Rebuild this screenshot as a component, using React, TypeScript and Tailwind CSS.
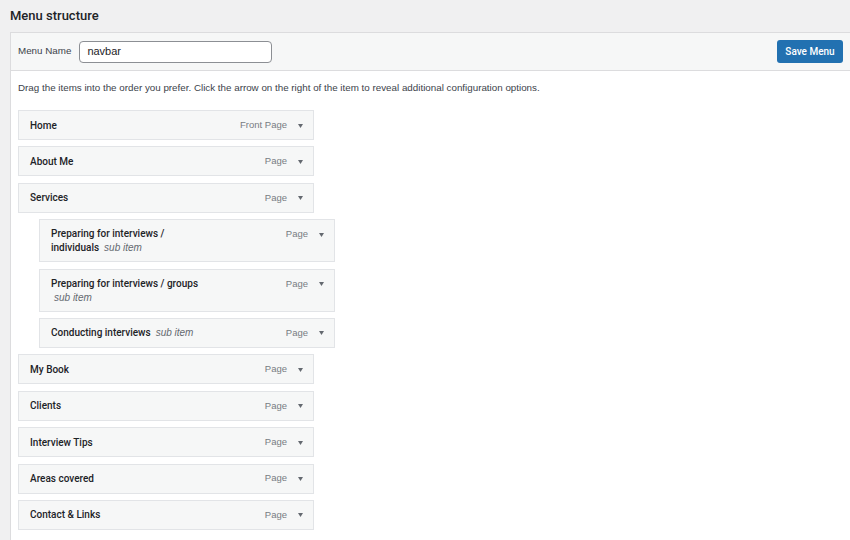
const font = "font-['Liberation_Sans','Helvetica',sans-serif]";
const strong = "font-['Roboto','Liberation_Sans',sans-serif] font-medium";

type Item = { title: string; type: string; sub?: boolean; wrap?: "inline" | "below" | "twoLine" };

const items: Item[] = [
  { title: "Home", type: "Front Page" },
  { title: "About Me", type: "Page" },
  { title: "Services", type: "Page" },
  { title: "Preparing for interviews /", type: "Page", sub: true, wrap: "twoLine" },
  { title: "Preparing for interviews / groups", type: "Page", sub: true, wrap: "below" },
  { title: "Conducting interviews", type: "Page", sub: true, wrap: "inline" },
  { title: "My Book", type: "Page" },
  { title: "Clients", type: "Page" },
  { title: "Interview Tips", type: "Page" },
  { title: "Areas covered", type: "Page" },
  { title: "Contact & Links", type: "Page" },
];

function SubLabel({ gap = "ml-[5px]" }: { gap?: string }) {
  return <span className={`${gap} ${font} font-normal italic text-[#646970]`}>sub item</span>;
}

function Title({ item }: { item: Item }) {
  if (item.wrap === "twoLine") {
    return (
      <div className="leading-[14px]">
        <div>Preparing for interviews /</div>
        <div>
          individuals
          <SubLabel />
        </div>
      </div>
    );
  }
  if (item.wrap === "below") {
    return (
      <div className="leading-[14px]">
        <div>{item.title}</div>
        <div>
          <SubLabel gap="ml-[3px]" />
        </div>
      </div>
    );
  }
  return (
    <div>
      {item.title}
      {item.sub && <SubLabel />}
    </div>
  );
}

function MenuItem({ item }: { item: Item }) {
  const tall = item.wrap === "twoLine" || item.wrap === "below";
  return (
    <div
      className={`w-[296px] border border-[#e2e4e7] bg-[#f6f7f7] flex justify-between pl-[11px] pr-[10px] ${
        item.sub ? "ml-[21px]" : ""
      } ${tall ? "h-[43px] items-start pt-[7px]" : "h-[30px] items-center"}`}
    >
      <div className={`text-[10px] ${strong} text-[#1d2327]`}>
        <Title item={item} />
      </div>
      <div className="flex items-center gap-[11px]">
        <span className="text-[9.5px] text-[#787c82]">{item.type}</span>
        <svg width="5" height="4" viewBox="0 0 5 4" className="mt-[1px]">
          <path d="M0 0 L5 0 L2.5 4 Z" fill="#646970" />
        </svg>
      </div>
    </div>
  );
}

export default function App() {
  return (
    <div className={`w-[850px] h-[540px] overflow-hidden bg-[#f0f0f1] ${font} text-[#1d2327]`}>
      <h2 className={`pl-[10px] pt-[6px] h-[32px] text-[13px] ${strong}`}>Menu structure</h2>
      <div className="ml-[10px] border border-r-0 border-[#dcdcde] bg-white">
        <div className="h-[38px] bg-[#f6f7f7] border-b border-[#dcdcde] flex items-center pl-[7px] pr-[7px]">
          <span className="text-[9.8px] text-[#3c434a]">Menu Name</span>
          <div className="ml-[8px] w-[193px] h-[22px] border border-[#8c8f94] rounded-[4px] bg-white flex items-center px-[7px] text-[11px]">
            navbar
          </div>
          <div className="flex-1" />
          <button className={`h-[23px] w-[66px] bg-[#2271b1] rounded-[3px] text-white text-[10px] ${strong}`}>
            Save Menu
          </button>
        </div>
        <div className="pl-[7px] pt-[10px] pb-[20px]">
          <p className="text-[9.8px] text-[#3c434a] leading-[14px]">
            Drag the items into the order you prefer. Click the arrow on the right of the item to reveal additional
            configuration options.
          </p>
          <div className="mt-[15px] flex flex-col gap-[6.4px]">
            {items.map((it) => (
              <MenuItem key={it.title} item={it} />
            ))}
          </div>
        </div>
      </div>
    </div>
  );
}
